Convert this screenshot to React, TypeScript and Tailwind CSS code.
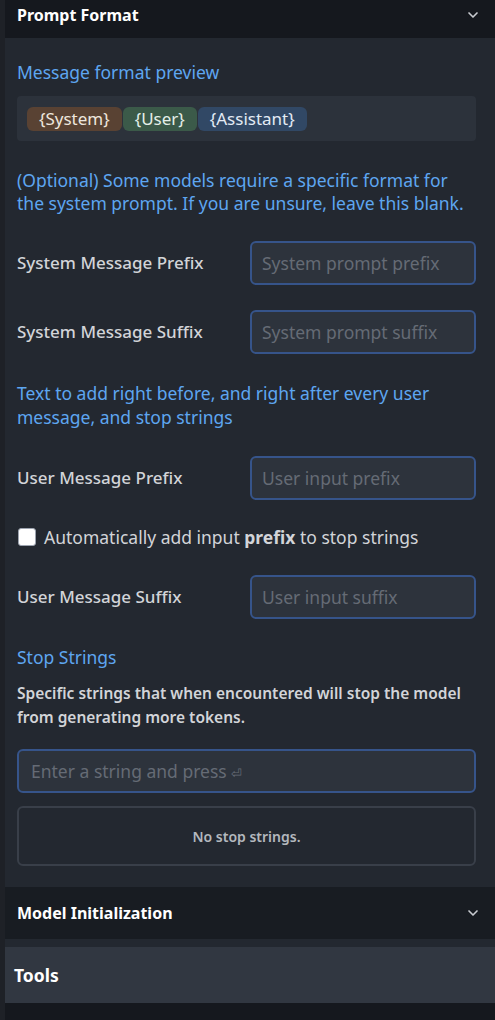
import { ChevronDown } from "lucide-react";

const font = { fontFamily: '"Noto Sans", "Open Sans", sans-serif' };

const Field = ({ label, placeholder }: { label: string; placeholder: string }) => (
  <div className="flex items-center justify-between">
    <span className="text-[17px] font-medium text-[#d2d4d8]">{label}</span>
    <div className="w-[226px] h-[44px] rounded-md border-2 border-[#36548a] bg-[#2d333c] flex items-center px-[10px]">
      <span className="text-[17.5px] text-[#656b75]">{placeholder}</span>
    </div>
  </div>
);

export default function App() {
  return (
    <div className="w-[495px] h-[1020px] bg-[#15181e] flex" style={font}>
      <div className="w-[5px] shrink-0 bg-[#1e2127]" />
      <div className="flex-1 flex flex-col">
        {/* header */}
        <div className="h-[38px] bg-[#15181e] flex items-center justify-between pl-[12px] pr-[14px] pb-[8px]">
          <span className="text-[16px] font-bold text-white">Prompt Format</span>
          <ChevronDown size={16} strokeWidth={2.5} className="text-[#c8cbd0]" />
        </div>

        <div className="bg-[#232830] pl-[12px] pr-[19px] pt-[22px] pb-[21px] flex flex-col">
          <div className="text-[17.5px] text-[#5ea6f0] leading-[24px]">Message format preview</div>
          <div className="mt-[12px] h-[45px] rounded bg-[#2c323b] flex items-center px-[10px] gap-[1px]">
            <span className="px-[12px] h-[24px] flex items-center rounded-md bg-[#594233] text-[#eee6dd] text-[17px]">{"{System}"}</span>
            <span className="px-[12px] h-[24px] flex items-center rounded-md bg-[#3b5a49] text-[#e4efe8] text-[17px]">{"{User}"}</span>
            <span className="px-[12px] h-[24px] flex items-center rounded-md bg-[#314865] text-[#e3ebf5] text-[17px]">{"{Assistant}"}</span>
          </div>

          <p className="mt-[28px] text-[17.5px] leading-[23px] text-[#5ea6f0]">
            (Optional) Some models require a specific format for the system prompt. If you are unsure, leave this blank.
          </p>

          <div className="mt-[26px] flex flex-col gap-[25px]">
            <Field label="System Message Prefix" placeholder="System prompt prefix" />
            <Field label="System Message Suffix" placeholder="System prompt suffix" />
          </div>

          <p className="mt-[27px] text-[17.5px] leading-[24px] text-[#5ea6f0]">
            Text to add right before, and right after every user message, and stop strings
          </p>

          <div className="mt-[27px]">
            <Field label="User Message Prefix" placeholder="User input prefix" />
          </div>

          <div className="mt-[25px] h-[24px] flex items-center gap-[8px] pl-[1px]">
            <span className="w-[18px] h-[18px] rounded-[3px] bg-white border border-[#9ca3af]" />
            <span className="text-[17.5px] text-[#d2d4d8]">
              Automatically add input <span className="font-bold">prefix</span> to stop strings
            </span>
          </div>

          <div className="mt-[26px]">
            <Field label="User Message Suffix" placeholder="User input suffix" />
          </div>

          <div className="mt-[26px] text-[17.5px] leading-[24px] text-[#5ea6f0]">Stop Strings</div>
          <p className="mt-[12px] text-[15.5px] leading-[24px] font-semibold text-[#d2d4d8]">
            Specific strings that when encountered will stop the model from generating more tokens.
          </p>

          <div className="mt-[20px] h-[44px] rounded-md border-2 border-[#36548a] bg-[#2d333c] flex items-center px-[12px]">
            <span className="text-[17.5px] text-[#656b75]">Enter a string and press <span className="text-[13px]">⏎</span></span>
          </div>

          <div className="mt-[13px] h-[60px] rounded-md border-2 border-[#393f49] flex items-center justify-center">
            <span className="text-[14px] font-semibold text-[#b4b8be]">No stop strings.</span>
          </div>
        </div>

        <div className="h-[52px] bg-[#181c22] flex items-center justify-between pl-[12px] pr-[14px]">
          <span className="text-[16px] font-bold text-white">Model Initialization</span>
          <ChevronDown size={16} strokeWidth={2.5} className="text-[#c8cbd0]" />
        </div>
        <div className="h-[8px] bg-[#232830]" />
        <div className="h-[56px] bg-[#313741] flex items-center pl-[9px]">
          <span className="text-[17.5px] font-bold text-white">Tools</span>
        </div>
        <div className="flex-1 bg-[#15181e]" />
      </div>
    </div>
  );
}
